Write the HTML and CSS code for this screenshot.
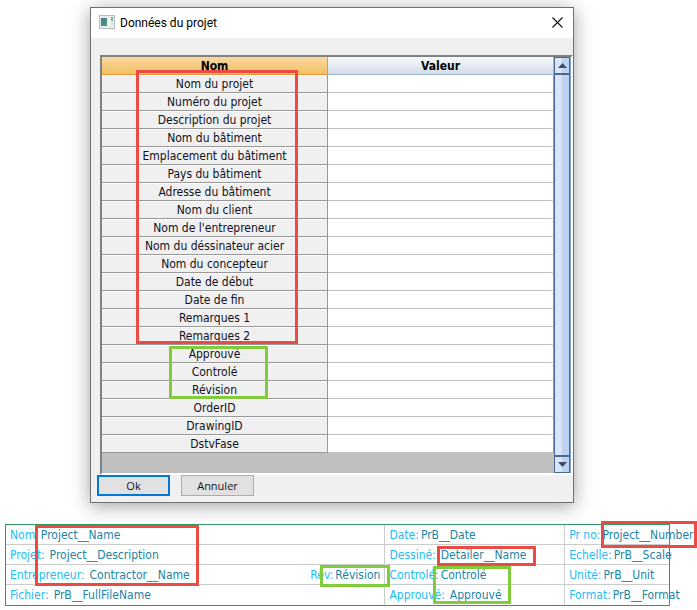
FILE: index.html
```html
<!DOCTYPE html>
<html lang="fr">
<head>
<meta charset="utf-8">
<title>Données du projet</title>
<link rel="stylesheet" href="styles.css">
</head>
<body>
<main class="page">
  <section class="dialog" role="dialog" aria-labelledby="dialog-title">
    <header class="titlebar">
      <svg class="app-icon" viewBox="0 0 16 14" aria-hidden="true">
        <defs>
          <linearGradient id="pane" x1="0" y1="0" x2="1" y2="1">
            <stop offset="0" stop-color="#4a77a8"/>
            <stop offset="1" stop-color="#47a06c"/>
          </linearGradient>
        </defs>
        <rect x=".5" y=".5" width="15" height="13" fill="#e9ebed" stroke="#b9bdc1"/>
        <rect x="2" y="3" width="6" height="8" fill="url(#pane)"/>
        <rect x="9" y="3" width="3" height="8" fill="#f6f6f6"/>
        <rect x="12" y="2" width="2" height="4" fill="#79b2a8"/>
        <rect x="12" y="6" width="2" height="5" fill="#dce6ea"/>
      </svg>
      <h1 class="title" id="dialog-title">Données du projet</h1>
      <button class="close" type="button" aria-label="Fermer">
        <svg viewBox="0 0 11 11" aria-hidden="true"><path d="M.5 .5l10 10M10.500 .5l-10 10" fill="none" stroke="#111" stroke-width="1.1"/></svg>
      </button>
    </header>
    <div class="grid-panel">
      <div class="grid-area">
        <table class="data">
          <thead><tr><th scope="col" class="head-name">Nom</th><th scope="col" class="head-value">Valeur</th></tr></thead>
          <tbody>
            <tr><th scope="row">Nom du projet</th><td></td></tr>
            <tr><th scope="row">Numéro du projet</th><td></td></tr>
            <tr><th scope="row">Description du projet</th><td></td></tr>
            <tr><th scope="row">Nom du bâtiment</th><td></td></tr>
            <tr><th scope="row">Emplacement du bâtiment</th><td></td></tr>
            <tr><th scope="row">Pays du bâtiment</th><td></td></tr>
            <tr><th scope="row">Adresse du bâtiment</th><td></td></tr>
            <tr><th scope="row">Nom du client</th><td></td></tr>
            <tr><th scope="row">Nom de l'entrepreneur</th><td></td></tr>
            <tr><th scope="row">Nom du déssinateur acier</th><td></td></tr>
            <tr><th scope="row">Nom du concepteur</th><td></td></tr>
            <tr><th scope="row">Date de début</th><td></td></tr>
            <tr><th scope="row">Date de fin</th><td></td></tr>
            <tr><th scope="row">Remarques 1</th><td></td></tr>
            <tr><th scope="row">Remarques 2</th><td></td></tr>
            <tr><th scope="row">Approuvé</th><td></td></tr>
            <tr><th scope="row">Controlé</th><td></td></tr>
            <tr><th scope="row">Révision</th><td></td></tr>
            <tr><th scope="row">OrderID</th><td></td></tr>
            <tr><th scope="row">DrawingID</th><td></td></tr>
            <tr><th scope="row">DstvFase</th><td></td></tr>
          </tbody>
        </table>
        <span class="mark red mark-fields"></span>
        <span class="mark green mark-status"></span>
      </div>
      <div class="scrollbar">
        <button class="arrow" type="button" aria-label="Défiler vers le haut"><svg viewBox="0 0 9 5" aria-hidden="true"><path d="M0 5L4.500 0L9 5z" fill="#3c4a6b"/></svg></button>
        <div class="thumb"></div>
        <button class="arrow" type="button" aria-label="Défiler vers le bas"><svg viewBox="0 0 9 5" aria-hidden="true"><path d="M0 0L4.500 5L9 0z" fill="#3c4a6b"/></svg></button>
      </div>
    </div>
    <footer class="actions">
      <button class="btn primary" type="button">Ok</button>
      <button class="btn" type="button">Annuler</button>
    </footer>
  </section>

  <section class="cartouche">
    <div class="cell"><span class="label">Nom:</span><span class="value">Project__Name</span></div>
    <div class="cell"><span class="label">Date:</span><span class="value">PrB__Date</span></div>
    <div class="cell"><span class="label">Pr no:</span><span class="value">Project__Number</span></div>

    <div class="cell"><span class="label">Projet:</span><span class="value spaced">Project__Description</span></div>
    <div class="cell"><span class="label">Dessiné:</span><span class="value spaced">Detailer__Name</span></div>
    <div class="cell"><span class="label">Echelle:</span><span class="value">PrB__Scale</span></div>

    <div class="cell"><span class="label">Entrepreneur:</span><span class="value spaced">Contractor__Name</span><span class="label rev">Rev:</span><span class="value">Révision</span></div>
    <div class="cell"><span class="label">Controlé:</span><span class="value">Controlé</span></div>
    <div class="cell"><span class="label">Unité:</span><span class="value">PrB__Unit</span></div>

    <div class="cell"><span class="label">Fichier:</span><span class="value spaced">PrB__FullFileName</span></div>
    <div class="cell"><span class="label">Approuvé:</span><span class="value spaced">Approuvé</span></div>
    <div class="cell"><span class="label">Format:</span><span class="value">PrB__Format</span></div>

    <span class="mark red mark-project"></span>
    <span class="mark green mark-revision"></span>
    <span class="mark red mark-detailer"></span>
    <span class="mark green mark-check"></span>
    <span class="mark red mark-number"></span>
  </section>
</main>
</body>
</html>
```
FILE: styles.css
```css
* { box-sizing: border-box; }

body {
  margin: 0;
  background: #fff;
  overflow-x: hidden;
  font: 12px/17px "DejaVu Sans Condensed", "DejaVu Sans", sans-serif;
  color: #111122;
}

button { font: inherit; color: inherit; padding: 0; }

.page { padding-top: 7px; }

/* Dialog window */
.dialog {
  margin: 0 123px 0 90px;
  border: 1px solid #707070;
  background: #f0f0f0;
  box-shadow: 0 3px 18px rgba(0, 0, 0, .38);
}

.titlebar {
  display: flex;
  align-items: center;
  gap: 5px;
  height: 30px;
  padding: 0 10px 2px 8px;
  background: #fff;
}

.app-icon { width: 16px; height: 14px; }

.title {
  flex: 1;
  margin: 0;
  padding-top: 1px;
  font: 12px/16px Roboto, "Noto Sans", sans-serif;
  color: #000;
}

.close {
  display: flex;
  border: 0;
  background: none;
}

.close svg { width: 11px; height: 11px; }

.grid-panel {
  display: flex;
  margin: 17px 0 0 9px;
  border: 2px solid #6b6b6b;
  border-top-color: #808080;
  border-left-color: #808080;
  border-right: 2px solid #fff;
  border-bottom-color: #fff;
}

.grid-area {
  position: relative;
  flex: 1;
  padding-bottom: 20px;
  background: #c0c0c0;
}

.data {
  width: 100%;
  table-layout: fixed;
  border-collapse: separate;
  border-spacing: 0;
}

.data th, .data td {
  height: 18px;
  padding: 2px 0 0;
  line-height: 15px;
  text-align: center;
  font-weight: normal;
}

.data tbody th {
  background: #f0f0f0;
  border-right: 1px solid #989898;
  border-bottom: 1px solid #989898;
  box-shadow: inset 0 1px #fff;
}

.data tbody td {
  background: #fff;
  border-right: 1px solid #989898;
  border-bottom: 1px solid #c0c0c0;
}

.data thead th { font-weight: bold; color: #000; }

.data .head-name {
  background: linear-gradient(#f9d9a0, #f2c065);
  border-right: 1px solid #f29536;
  border-bottom: 1px solid #f29536;
}

.data .head-value {
  background: linear-gradient(#f8fafc, #d4dbe8);
  border-right: 1px solid #9eb6ce;
  border-bottom: 1px solid #9eb6ce;
}

.scrollbar {
  display: flex;
  flex-direction: column;
  width: 17px;
  border-right: 1px solid #84a6d4;
}

.arrow, .thumb {
  border: 1px solid #4c6897;
  background: linear-gradient(90deg, #d8e6fa 50%, #bfd3f0 50%);
}

.arrow {
  display: flex;
  align-items: center;
  justify-content: center;
  height: 17px;
}

.arrow svg { width: 9px; height: 5px; }

.thumb { flex: 1; }

.actions {
  display: flex;
  gap: 11px;
  padding: 0 6px 6px;
}

.btn {
  width: 73px;
  height: 21px;
  border: 1px solid #adadad;
  background: #e1e1e1;
  font: 11px/17px "Open Sans", "Noto Sans", sans-serif;
}

.btn.primary { border: 2px solid #0078d7; }

/* Drawing title block */
.cartouche {
  position: relative;
  display: grid;
  grid-template-columns: 380fr 180fr 104fr;
  margin: 21px 27px 0 5px;
  border: 1px solid #2f9a60;
  font: 12px/20px "DejaVu Sans Condensed", "DejaVu Sans", sans-serif;
}

.cell {
  display: flex;
  min-width: 0;
  height: 20px;
  padding: 0 4px;
  border-right: 1px solid #cccccc;
  border-bottom: 1px solid #cccccc;
  white-space: nowrap;
}

.cell:nth-child(3n) { border-right: 0; }
.cell:nth-child(n + 10) { border-bottom: 0; }

.label { color: #20bdf6; }
.value { margin-left: 2px; color: #1b84a6; }
.spaced { margin-left: 5px; }
.rev { margin-left: auto; }

/* Highlight frames drawn over the content */
.mark {
  position: absolute;
  border: 3px solid #ea4b45;
  pointer-events: none;
}

.mark.green { border-color: #80cc3a; }

.mark-fields { left: 34px; top: 13px; width: 162px; height: 274px; }
.mark-status { left: 67px; top: 289px; width: 99px; height: 53px; }
.mark-project { left: 29px; top: 0; width: 164px; height: 61px; }
.mark-revision { left: 314px; top: 40px; width: 70px; height: 22px; }
.mark-detailer { left: 431px; top: 21px; width: 99px; height: 20px; }
.mark-check { left: 427px; top: 41px; width: 78px; height: 38px; }
.mark-number { left: 595px; top: -4px; width: 96px; height: 27px; }
```
